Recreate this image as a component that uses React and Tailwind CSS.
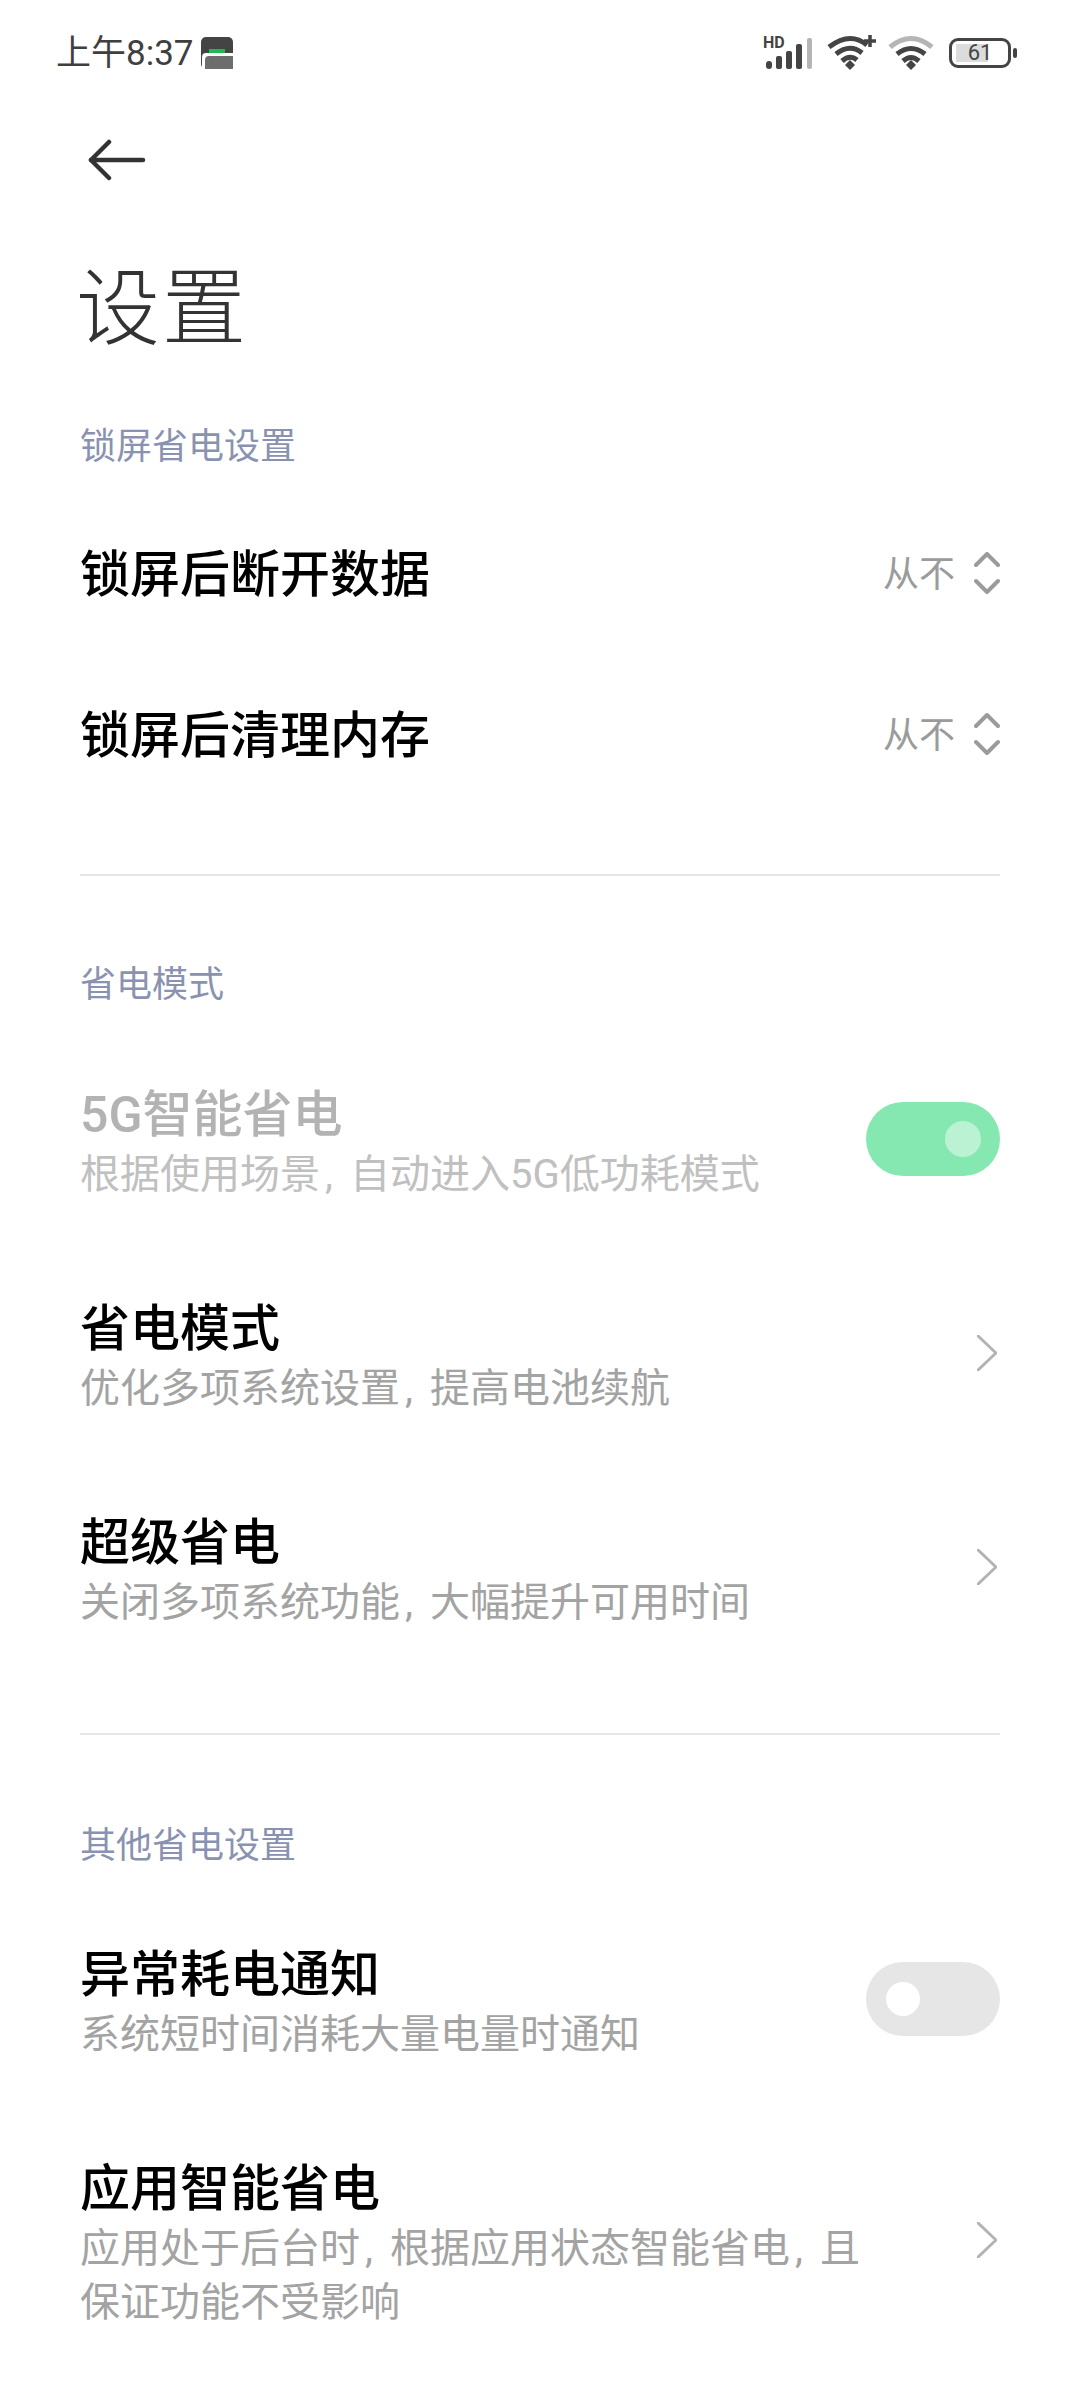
import { Fragment } from 'react'

const cjk = 'font-["Roboto","Noto_Sans_CJK_SC",sans-serif]'

function StatusBar() {
  return (
    <div className="h-[106px] flex items-center justify-between pl-[56px] pr-[69px]">
      <div className="flex items-center gap-[7px]">
        <span className="text-[35px] leading-none text-[#3f3f3f]">上午8:37</span>
        <svg width="32" height="32" viewBox="0 0 32 32">
          <rect width="32" height="32" rx="5" fill="#444" />
          <rect x="8" y="12" width="16" height="6" fill="#1db954" />
          <path d="M1 32V20a4 4 0 0 1 4-4h27v4H9a4 4 0 0 0-4 4v8z" fill="#fff" />
          <path d="M4 32V23a4 4 0 0 1 4-4h24v13z" fill="#6d6d6d" />
        </svg>
      </div>
      <div className="flex items-center">
        <svg width="52" height="36" viewBox="0 0 52 36" className="mr-[12px] overflow-visible">
          <text x="0" y="13" fontSize="16" fontWeight="700" fill="#444" fontFamily="Roboto, sans-serif">HD</text>
          <rect x="3" y="26" width="6" height="8" rx="3" fill="#444" />
          <rect x="13" y="21" width="6" height="13" rx="2" fill="#444" />
          <rect x="23" y="16" width="6" height="18" rx="2" fill="#444" />
          <rect x="33" y="9" width="6" height="25" rx="2" fill="#444" />
          <rect x="44" y="3" width="5" height="31" rx="2" fill="#b5b5b5" />
        </svg>
        <svg width="50" height="36" viewBox="0 0 50 36" className="mr-[11px]">
          <path d="M2 12 Q 23 -4 40 10" fill="none" stroke="#444" strokeWidth="5" />
          <path d="M9 19 Q 23 8 35 18" fill="none" stroke="#444" strokeWidth="5" />
          <path d="M15 26 Q 23 19 30 25" fill="none" stroke="#444" strokeWidth="5" />
          <path d="M18 30 L23 25 L28 30 L23 35z" fill="#444" />
          <path d="M37 6h12M43 0v12" stroke="#444" strokeWidth="3.5" />
        </svg>
        <svg width="46" height="36" viewBox="0 0 46 36" className="mr-[15px]">
          <path d="M2 12 Q 23 -5 44 12" fill="none" stroke="#b5b5b5" strokeWidth="5" />
          <path d="M9 19 Q 23 8 37 19" fill="none" stroke="#444" strokeWidth="5" />
          <path d="M15 26 Q 23 19 31 26" fill="none" stroke="#444" strokeWidth="5" />
          <path d="M18 30 L23 25 L28 30 L23 35z" fill="#444" />
        </svg>
        <div className="relative w-[62px] h-[30px] border-[3px] border-[#444] rounded-[9px] flex items-center justify-center">
          <div className="absolute left-[4px] top-[3px] bottom-[3px] w-[32px] bg-[#dcdcdc]" />
          <span className="relative text-[22px] leading-none text-[#444] font-['Roboto',sans-serif]">61</span>
          <div className="absolute -right-[9px] top-[7px] w-[4px] h-[10px] rounded-[2px] bg-[#444]" />
        </div>
      </div>
    </div>
  )
}

function Chevron() {
  return (
    <svg width="20" height="36" viewBox="0 0 20 36" fill="none" stroke="#b3b3b3" strokeWidth="3" strokeLinecap="round" strokeLinejoin="round" className="mr-[3px]">
      <path d="M1 1 L19 18 L1 35" />
    </svg>
  )
}

function UpDown() {
  return (
    <svg width="26" height="42" viewBox="0 0 26 42" fill="none" stroke="#9b9b9b" strokeWidth="4" strokeLinecap="round" strokeLinejoin="round" className="mb-[3px]">
      <path d="M2 13 L13 2 L24 13" />
      <path d="M2 29 L13 40 L24 29" />
    </svg>
  )
}

function Toggle({ on }) {
  return on ? (
    <div className="w-[134px] h-[74px] rounded-full bg-[#84e8b0] flex items-center justify-end pr-[19px] shrink-0">
      <div className="w-[36px] h-[36px] rounded-full bg-[#bcf2d4]" />
    </div>
  ) : (
    <div className="w-[134px] h-[74px] rounded-full bg-[#e6e6e6] flex items-center pl-[20px] shrink-0">
      <div className="w-[34px] h-[34px] rounded-full bg-white" />
    </div>
  )
}

function SectionLabel({ children, className }) {
  return <div className={`text-[36px] leading-[48px] text-[#8a92b2] ${className}`}>{children}</div>
}

function SelectRow({ title }) {
  return (
    <div className="h-[161px] flex items-center justify-between">
      <span className="text-[50px] leading-none font-medium text-black">{title}</span>
      <div className="flex items-center gap-[19px]">
        <span className="text-[36px] leading-none text-[#9b9b9b]">从不</span>
        <UpDown />
      </div>
    </div>
  )
}

// the phone's comma is narrower than a full-width cell
function Desc({ text }) {
  const parts = text.split('，')
  return parts.map((part, i) => (
    <Fragment key={i}>
      {part}
      {i < parts.length - 1 && <span className="inline-block w-[30px] pl-[5px]">,</span>}
    </Fragment>
  ))
}

function SwitchRow({ title, desc, right, dim }) {
  return (
    <div className="pt-[50px] pb-[46px] flex items-center justify-between">
      <div className="w-[800px]">
        <div className={`text-[50px] leading-[62px] font-medium ${dim ? 'text-[#b3b3b3]' : 'text-black'}`}>{title}</div>
        <div className={`mt-[2px] text-[40px] leading-[54px] ${dim ? 'text-[#c0c0c0]' : 'text-[#a3a3a3]'}`}>
          <Desc text={desc} />
        </div>
      </div>
      <div className="mb-[9px]">{right}</div>
    </div>
  )
}

export default function App() {
  return (
    <div className={`w-[1080px] h-[2400px] overflow-hidden bg-white ${cjk}`}>
      <StatusBar />
      <div className="pl-[88px] mt-[27px] h-[54px] flex items-center">
        <svg width="60" height="42" viewBox="0 0 60 42" fill="none" stroke="#333" strokeWidth="4.5" strokeLinecap="round" strokeLinejoin="round">
          <path d="M55 21 H3" />
          <path d="M21 3 L3 21 L21 39" />
        </svg>
      </div>
      <div className="px-[76px] mt-[73px] text-[84px] leading-[100px] font-light text-[#333] tracking-[2px]">设置</div>

      <div className="pl-[80px] pr-[80px]">
        <SectionLabel className="mt-[63px]">锁屏省电设置</SectionLabel>
        <div className="mt-[23px]">
          <SelectRow title="锁屏后断开数据" />
          <SelectRow title="锁屏后清理内存" />
        </div>
        <div className="mt-[58px] h-[2px] bg-[#e6e6e6]" />

        <SectionLabel className="mt-[85px]">省电模式</SectionLabel>
        <div className="mt-[25px]">
          <SwitchRow dim title="5G智能省电" desc="根据使用场景，自动进入5G低功耗模式" right={<Toggle on />} />
          <SwitchRow title="省电模式" desc="优化多项系统设置，提高电池续航" right={<Chevron />} />
          <SwitchRow title="超级省电" desc="关闭多项系统功能，大幅提升可用时间" right={<Chevron />} />
        </div>
        <div className="mt-[57px] h-[2px] bg-[#e6e6e6]" />

        <SectionLabel className="mt-[87px]">其他省电设置</SectionLabel>
        <div className="mt-[24px]">
          <SwitchRow title="异常耗电通知" desc="系统短时间消耗大量电量时通知" right={<Toggle />} />
          <SwitchRow title="应用智能省电" desc="应用处于后台时，根据应用状态智能省电，且保证功能不受影响" right={<Chevron />} />
        </div>
      </div>
    </div>
  )
}
